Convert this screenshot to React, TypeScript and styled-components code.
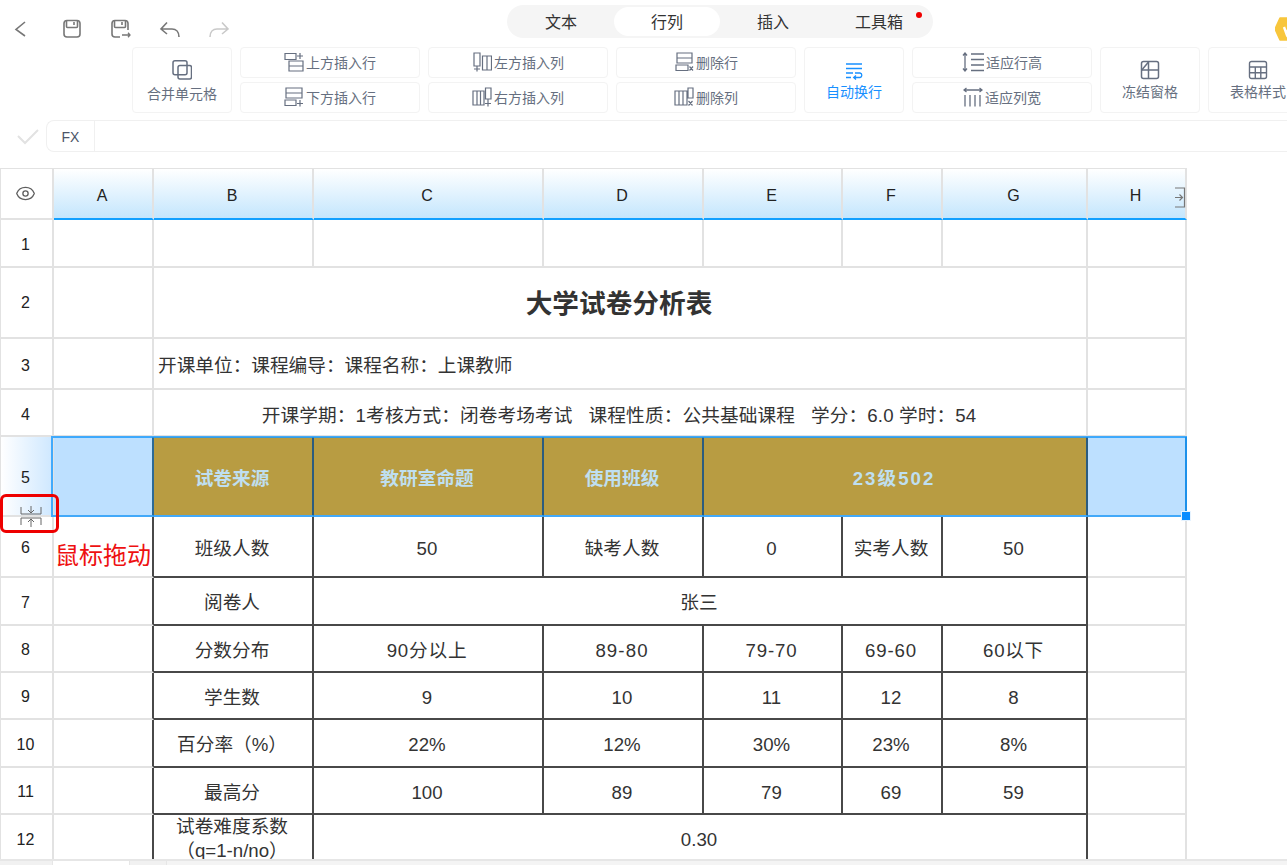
import React from "react";
import styled, { createGlobalStyle } from "styled-components";
import { Eye } from "lucide-react";

const Global = createGlobalStyle`
  html, body { margin: 0; padding: 0; background: #fff; }
  body { font-family: "Liberation Sans", "Noto Sans CJK SC", sans-serif; overflow: hidden; }
  * { box-sizing: border-box; }
`;

const Page = styled.div`
  width: 1287px;
  height: 865px;
  display: flex;
  flex-direction: column;
  overflow: hidden;
`;

const TopBar = styled.header`
  height: 47px;
  flex: none;
  display: flex;
  align-items: flex-start;
  padding: 5px 0 0 8px;
`;

const IconBtn = styled.span<{ $gap: number; $color?: string }>`
  width: 24px;
  height: 24px;
  margin-top: 12px;
  margin-left: ${(p) => p.$gap}px;
  flex: none;
  color: ${(p) => p.$color ?? "#777"};
  svg { display: block; }
`;

const TabPill = styled.nav`
  margin-left: 276px;
  width: 426px;
  height: 33px;
  flex: none;
  display: flex;
  align-items: center;
  padding: 0 0 0 1px;
  background: #f5f5f5;
  border-radius: 17px;
  position: relative;
`;

const Tab = styled.span<{ $active?: boolean }>`
  width: 106px;
  height: 29px;
  display: flex;
  align-items: center;
  justify-content: center;
  padding-bottom: 2px;
  font-size: 16px;
  color: #333;
  font-family: "Noto Sans CJK SC", sans-serif;
  border-radius: 15px;
  background: ${(p) => (p.$active ? "#fff" : "transparent")};
`;

const RedDot = styled.i`
  position: absolute;
  left: 409px;
  top: 7px;
  width: 6px;
  height: 6px;
  border-radius: 50%;
  background: #f00000;
`;

const Logo = styled.svg`
  margin-left: 342px;
  margin-top: 12px;
  flex: none;
`;

const Ribbon = styled.section`
  height: 66px;
  flex: none;
  display: flex;
  gap: 8px;
  padding-left: 132px;
  width: 1400px;
`;

const Tile = styled.button<{ $gap: number; $active?: boolean }>`
  width: 100px;
  height: 66px;
  flex: none;
  padding: 12px 0 0;
  margin: 0;
  display: flex;
  flex-direction: column;
  align-items: center;
  gap: ${(p) => p.$gap}px;
  border: 1px solid #f3f3f3;
  border-radius: 4px;
  background: #fff;
  font: 14px/20px "Noto Sans CJK SC", sans-serif;
  color: ${(p) => (p.$active ? "#1890ff" : "#666f80")};
  svg { display: block; flex: none; }
`;

const Stack = styled.div`
  width: 180px;
  flex: none;
  display: flex;
  flex-direction: column;
  gap: 4px;
`;

const StackBtn = styled.button`
  height: 31px;
  padding: 0 0 1px;
  margin: 0;
  display: flex;
  align-items: center;
  justify-content: center;
  gap: 2px;
  border: 1px solid #f3f3f3;
  border-radius: 4px;
  background: #fff;
  font: 14px/20px "Noto Sans CJK SC", sans-serif;
  color: #666f80;
  svg { display: block; flex: none; }
`;

const FormulaRow = styled.div`
  margin-top: 7px;
  height: 32px;
  flex: none;
  display: flex;
  align-items: center;
`;

const CheckSlot = styled.span`
  width: 46px;
  flex: none;
  padding: 2px 0 0 17px;
  svg { display: block; }
`;

const FormulaBox = styled.div`
  flex: 1;
  height: 32px;
  border: 1px solid #f0f0f0;
  border-right: 0;
  border-radius: 8px 0 0 8px;
  display: flex;
`;

const FxLabel = styled.span`
  width: 48px;
  border-right: 1px solid #f0f0f0;
  display: flex;
  align-items: center;
  justify-content: center;
  padding-top: 2px;
  font-size: 14px;
  color: #4c5568;
`;

const Sheet = styled.main`
  margin-top: 16px;
  height: 691px;
  flex: none;
  position: relative;
  overflow: hidden;
`;

const Grid = styled.div`
  display: grid;
  grid-template-columns: 54px 100px 160px 230px 160px 139px 100px 145px 99px;
  grid-template-rows: 51px 48px 71px 51px 47px 80px 61px 48px 47px 47px 48px 47px 48px;
  width: 1187px;
  border-top: 1px solid #e2e2e2;
`;

type Kind = "corner" | "col" | "row" | "rowOn" | "blank" | "sel" | "gold" | "data" | "edge";

const defaultTop: Record<Kind, number> = {
  corner: 0,
  col: 4,
  row: 3,
  rowOn: 4,
  blank: 0,
  sel: 0,
  gold: 5,
  data: 4,
  edge: 0,
};

const Cell = styled.div<{
  $kind: Kind;
  $span?: number;
  $align?: string;
  $size?: number;
  $bold?: boolean;
  $top?: number;
  $track?: number;
}>`
  position: relative;
  grid-column: span ${(p) => p.$span ?? 1};
  display: flex;
  align-items: center;
  justify-content: ${(p) => p.$align ?? "center"};
  text-align: center;
  white-space: pre;
  padding: ${(p) => p.$top ?? defaultTop[p.$kind]}px 2px 0 ${(p) => (p.$align ? "4px" : "0")};
  font-size: ${(p) => p.$size ?? 18.67}px;
  letter-spacing: ${(p) => p.$track ?? 0}px;
  line-height: 24px;
  font-weight: ${(p) => (p.$bold ? 700 : 400)};
  color: #333;
  border-right: 2px solid #e2e2e2;
  border-bottom: 2px solid #e2e2e2;
  ${(p) => (p.$kind === "corner" ? `border-left: 1px solid #e2e2e2;` : "")}
  ${(p) =>
    p.$kind === "col"
      ? `background: linear-gradient(180deg, #fff 0%, #c4e6fd 100%);
         border-bottom: 2px solid #12a0ff;
         font-size: 16px; color: #222;`
      : ""}
  ${(p) =>
    p.$kind === "row" || p.$kind === "rowOn"
      ? `border-left: 1px solid #e2e2e2; font-size: 16px; color: #222;`
      : ""}
  ${(p) => (p.$kind === "rowOn" ? `background: linear-gradient(90deg, #fff 0%, #cfe8ff 100%);` : "")}
  ${(p) => (p.$kind === "sel" ? `background: #bde0ff; border-right-color: #2c6a97;` : "")}
  ${(p) =>
    p.$kind === "gold"
      ? `background: #b89c42; color: #bfdff0; font-weight: 700; border-right: 2px solid #2c5c7e;`
      : ""}
  ${(p) => (p.$kind === "data" ? `border-right: 2px solid #484848; border-bottom: 2px solid #484848;` : "")}
  ${(p) => (p.$kind === "edge" ? `border-right: 2px solid #484848;` : "")}
`;

const SelectionFrame = styled.div`
  position: absolute;
  left: 51px;
  top: 268px;
  width: 1136px;
  height: 81px;
  border: 2px solid rgba(26, 155, 255, 0.8);
  pointer-events: none;
`;

const FillHandle = styled.i`
  position: absolute;
  left: 1181px;
  top: 343px;
  width: 10px;
  height: 10px;
  background: #0a8cff;
  border: 1px solid #e6f3ff;
`;

const DragMark = styled.div`
  position: absolute;
  left: 0;
  top: 326px;
  width: 59px;
  height: 39px;
  border: 3px solid #ee0000;
  border-radius: 6px;
`;

const DragIcon = styled.svg`
  position: absolute;
  left: 20px;
  top: 337px;
`;

const DragNote = styled.span`
  position: absolute;
  left: 55px;
  top: 369px;
  font: 24px/34px "Noto Sans CJK SC", sans-serif;
  color: #ee1111;
`;

const CollapseIcon = styled.svg`
  position: absolute;
  right: -1px;
  top: 18px;
`;

const BottomBar = styled.footer`
  flex: 1;
  display: flex;
  background: #f4f4f4;
  border-top: 2px solid #e6e6e6;
`;

const SheetTab = styled.span<{ $w: number; $on?: boolean }>`
  width: ${(p) => p.$w}px;
  background: ${(p) => (p.$on ? "#fff" : "#f1f1f1")};
  border-right: 1px solid #e6e6e6;
`;

const S = { fill: "none", stroke: "currentColor", strokeWidth: 1.4 } as const;

const BackIcon = () => (
  <svg width="24" height="24" viewBox="0 0 24 24" {...S} strokeWidth={1.6}>
    <path d="M17 5l-9 7.500L17 19" />
  </svg>
);
const SaveIcon = () => (
  <svg width="24" height="24" viewBox="0 0 24 24" {...S} strokeWidth={1.6}>
    <rect x="4" y="3.500" width="16" height="16.500" rx="3" />
    <path d="M6.500 4v5.500a1 1 0 0 0 1 1h9a1 1 0 0 0 1-1V4M14 5v3" />
  </svg>
);
const SaveAsIcon = () => (
  <svg width="24" height="24" viewBox="0 0 24 24" {...S} strokeWidth={1.6}>
    <path d="M12 20H7a3 3 0 0 1-3-3V6.500a3 3 0 0 1 3-3h10a3 3 0 0 1 3 3V13" />
    <path d="M6.500 4v5.500a1 1 0 0 0 1 1h9a1 1 0 0 0 1-1V4M14 5v3" />
    <path d="M14 18h8M20 15.800l2 2.200-2 2.200" strokeWidth={1.3} />
  </svg>
);
const UndoIcon = () => (
  <svg width="24" height="24" viewBox="0 0 24 24" {...S} strokeWidth={1.6}>
    <path d="M9 5.500L3 12l6 5M3 12h11c4 0 7 3 7 8" />
  </svg>
);
const RedoIcon = () => (
  <svg width="24" height="24" viewBox="0 0 24 24" {...S} strokeWidth={1.6}>
    <path d="M15 5.500L21 12l-6 5M21 12H10c-4 0-7 3-7 8" />
  </svg>
);
const CheckIcon = () => (
  <svg width="22" height="18" viewBox="0 0 22 18" fill="none" stroke="#e2e2e2" strokeWidth="2">
    <path d="M1 8l7 7L21 2" />
  </svg>
);

const MergeIcon = () => (
  <svg width="20" height="20" viewBox="0 0 20 20" {...S} strokeWidth={1.5}>
    <rect x="1" y="0.800" width="14" height="14" rx="2" />
    <rect x="6" y="5.500" width="13.500" height="13.500" rx="2" />
  </svg>
);

const Sq = ({ children, w = 20 }: { children: React.ReactNode; w?: number }) => (
  <svg width={w} height="20" viewBox={`0 0 ${w} 20`} {...S} strokeWidth={1.2}>
    {children}
  </svg>
);

const InsertAbove = () => (
  <Sq>
    <path d="M1 1.500h11v6H1zM5 9h14v10H5zM5 14h14M16 1v6M13 4h6" />
  </Sq>
);
const InsertBelow = () => (
  <Sq>
    <path d="M2 1h16v10H2zM2 6h16M1 13h11v5.500H1zM16 13v6.500M13 16.500h6" />
  </Sq>
);
const InsertLeft = () => (
  <Sq>
    <path d="M2 1h6v13H2zM5 14.500v5M2 17h6M10.500 4h9v14h-9zM15 4v14" />
  </Sq>
);
const InsertRight = () => (
  <Sq>
    <path d="M1 4h11v14H1zM5 4v14M8.500 4v14M13.500 1h5.500v11h-5.500zM16 12.500v7M13 16.500h6" />
  </Sq>
);
const DeleteRow = () => (
  <Sq>
    <path d="M3 1h15v10H3zM3 6h15M2 13h12v5.500H2zM15.500 14.500l3.500 4M19 14.500l-3.500 4" />
  </Sq>
);
const DeleteCol = () => (
  <Sq>
    <path d="M1 4h12v14H1zM5 4v14M9 4v14M14 1h5v10h-5zM14.500 14l4 4.500M18.500 14l-4 4.500" />
  </Sq>
);
const RowFit = () => (
  <Sq w={22}>
    <path d="M3 1v18M1 3.500L3 1l2 2.500M1 16.500L3 19l2-2.500M9 2h13M9 7.500h13M9 13h13M9 18.500h13" strokeWidth={1.3} />
  </Sq>
);
const ColFit = () => (
  <Sq>
    <path d="M1 3h18M3.500 1L1 3l2.500 2M16.500 1L19 3l-2.500 2M2 8v11.500M7 8v11.500M12 8v11.500M17 8v11.500" strokeWidth={1.3} />
  </Sq>
);
const WrapIcon = () => (
  <svg width="20" height="20" viewBox="0 0 20 20" {...S} strokeWidth={1.3}>
    <path d="M2 4h16M2 8.500h16M2 13h7M2 17.500h5M11 13h5a2.300 2.300 0 0 1 0 4.500h-6M12 15.500l-2.300 2 2.300 2" />
  </svg>
);
const FreezeIcon = () => (
  <svg width="20" height="20" viewBox="0 0 20 20" {...S} strokeWidth={1.5}>
    <rect x="1.500" y="1.500" width="17" height="17" rx="2" />
    <path d="M8.500 1.500v17M1.500 10h17" />
    <path d="M1.800 10L8.500 2" />
  </svg>
);
const TableIcon = () => (
  <svg width="20" height="20" viewBox="0 0 20 20" {...S} strokeWidth={1.4}>
    <rect x="1.500" y="1.500" width="17" height="17" rx="2" />
    <path d="M1.500 7h17M1.500 12.800h17M7.300 7v11.500M12.800 7v11.500" />
  </svg>
);

const columnNames = ["A", "B", "C", "D", "E", "F", "G"];

type DataCell = { t: string; span?: number; track?: number; top?: number };

const dataRows: { n: string; cells: DataCell[] }[] = [
  { n: "6", cells: [{ t: "班级人数" }, { t: "50" }, { t: "缺考人数" }, { t: "0" }, { t: "实考人数" }, { t: "50" }] },
  { n: "7", cells: [{ t: "阅卷人" }, { t: "张三", span: 5 }] },
  {
    n: "8",
    cells: [
      { t: "分数分布" },
      { t: "90分以上", track: 0.8 },
      { t: "89-80", track: 1.1 },
      { t: "79-70", track: 0.9 },
      { t: "69-60", track: 0.9 },
      { t: "60以下", track: 0.7 },
    ],
  },
  { n: "9", cells: [{ t: "学生数" }, { t: "9" }, { t: "10" }, { t: "11" }, { t: "12" }, { t: "8" }] },
  { n: "10", cells: [{ t: "百分率（%）" }, { t: "22%" }, { t: "12%" }, { t: "30%" }, { t: "23%" }, { t: "8%" }] },
  { n: "11", cells: [{ t: "最高分" }, { t: "100" }, { t: "89" }, { t: "79" }, { t: "69" }, { t: "59" }] },
  { n: "12", cells: [{ t: "试卷难度系数\n（q=1-n/no）", top: 2 }, { t: "0.30", span: 5 }] },
];

const mergedRows: {
  n: string;
  text: string;
  size?: number;
  bold?: boolean;
  align?: string;
  top: number;
  labelTop: number;
  track?: number;
}[] = [
  { n: "2", text: "大学试卷分析表", size: 26.67, bold: true, top: 2, labelTop: 0 },
  { n: "3", text: "开课单位：课程编导：课程名称：上课教师", align: "flex-start", top: 4, labelTop: 4 },
  {
    n: "4",
    text: "开课学期：1考核方式：闭卷考场考试   课程性质：公共基础课程   学分：6.0 学时：54",
    top: 6,
    labelTop: 4,
    track: 0.12,
  },
];

export default function App() {
  return (
    <Page>
      <Global />
      <TopBar>
        <IconBtn $gap={0}><BackIcon /></IconBtn>
        <IconBtn $gap={28}><SaveIcon /></IconBtn>
        <IconBtn $gap={24}><SaveAsIcon /></IconBtn>
        <IconBtn $gap={26}><UndoIcon /></IconBtn>
        <IconBtn $gap={25} $color="#c9c9c9"><RedoIcon /></IconBtn>
        <TabPill>
          <Tab>文本</Tab>
          <Tab $active>行列</Tab>
          <Tab>插入</Tab>
          <Tab>工具箱</Tab>
          <RedDot />
        </TabPill>
        <Logo width="24" height="24" viewBox="0 0 24 24">
          <polygon points="5,1 22,1 24,12 22,23 5,23 0,12" fill="#f8c63c" strokeLinejoin="round" stroke="#f8c63c" strokeWidth="1.5" />
          <path d="M9 10l2.500 7 2.500-7" fill="none" stroke="#fff" strokeWidth="2.4" />
        </Logo>
      </TopBar>

      <Ribbon>
        <Tile $gap={3}><MergeIcon />合并单元格</Tile>
        <Stack>
          <StackBtn><InsertAbove />上方插入行</StackBtn>
          <StackBtn><InsertBelow />下方插入行</StackBtn>
        </Stack>
        <Stack>
          <StackBtn><InsertLeft />左方插入列</StackBtn>
          <StackBtn><InsertRight />右方插入列</StackBtn>
        </Stack>
        <Stack>
          <StackBtn><DeleteRow />删除行</StackBtn>
          <StackBtn><DeleteCol />删除列</StackBtn>
        </Stack>
        <Tile $gap={1} $active><WrapIcon />自动换行</Tile>
        <Stack>
          <StackBtn><RowFit />适应行高</StackBtn>
          <StackBtn><ColFit />适应列宽</StackBtn>
        </Stack>
        <Tile $gap={1}><FreezeIcon />冻结窗格</Tile>
        <Tile $gap={1}><TableIcon />表格样式</Tile>
      </Ribbon>

      <FormulaRow>
        <CheckSlot><CheckIcon /></CheckSlot>
        <FormulaBox>
          <FxLabel>FX</FxLabel>
        </FormulaBox>
      </FormulaRow>

      <Sheet>
        <Grid>
          <Cell $kind="corner"><Eye size={21} strokeWidth={1.5} color="#5f5f5f" /></Cell>
          {columnNames.map((c) => (
            <Cell key={c} $kind="col">{c}</Cell>
          ))}
          <Cell $kind="col">
            H
            <CollapseIcon width="12" height="21" viewBox="0 0 12 21" fill="none" stroke="#777" strokeWidth="1.2">
              <path d="M1 1h9.500v19H1M1 10.500h7M5.500 7.500l3 3-3 3" />
            </CollapseIcon>
          </Cell>

          <Cell $kind="row">1</Cell>
          {Array.from({ length: 8 }, (_, i) => (
            <Cell key={i} $kind="blank" />
          ))}

          {mergedRows.map((r) => (
            <React.Fragment key={r.n}>
              <Cell $kind="row" $top={r.labelTop}>{r.n}</Cell>
              <Cell $kind="blank" />
              <Cell $kind="blank" $span={6} $size={r.size} $bold={r.bold} $align={r.align} $top={r.top} $track={r.track}>
                {r.text}
              </Cell>
              <Cell $kind="blank" />
            </React.Fragment>
          ))}

          <Cell $kind="rowOn">5</Cell>
          <Cell $kind="sel" />
          <Cell $kind="gold">试卷来源</Cell>
          <Cell $kind="gold">教研室命题</Cell>
          <Cell $kind="gold">使用班级</Cell>
          <Cell $kind="gold" $span={3} $track={2}>23级502</Cell>
          <Cell $kind="sel" />

          {dataRows.map((r) => (
            <React.Fragment key={r.n}>
              <Cell $kind="row">{r.n}</Cell>
              <Cell $kind="edge" />
              {r.cells.map((c, i) => (
                <Cell key={i} $kind="data" $span={c.span} $track={c.track} $top={c.top}>{c.t}</Cell>
              ))}
              <Cell $kind="blank" />
            </React.Fragment>
          ))}
        </Grid>

        <SelectionFrame />
        <FillHandle />
        <DragMark />
        <DragIcon width="22" height="23" viewBox="0 0 22 23" fill="none" stroke="#666" strokeWidth="1">
          <path d="M1 2v7h20V2M11 1v7M8 5l3 3 3-3M1 20v-7h20v7M11 22v-8M8 17l3-3 3 3" />
        </DragIcon>
        <DragNote>鼠标拖动</DragNote>
      </Sheet>

      <BottomBar>
        <SheetTab $w={53} />
        <SheetTab $w={77} $on />
        <SheetTab $w={37} />
      </BottomBar>
    </Page>
  );
}
